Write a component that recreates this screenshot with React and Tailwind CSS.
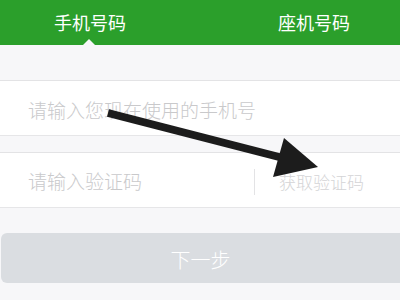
import React from 'react';

const font = { fontFamily: '"Noto Sans CJK SC", "Noto Sans", sans-serif' };

function Arrow() {
  return (
    <svg className="absolute left-0 top-0 pointer-events-none" width="400" height="300" viewBox="0 0 400 300">
      <line x1="108" y1="113" x2="283" y2="158" stroke="#1c1c1c" strokeWidth="8" strokeLinecap="butt" />
      <polygon points="284,138 318,167 273,177" fill="#1c1c1c" />
    </svg>
  );
}

export default function App() {
  return (
    <div className="relative w-[400px] h-[300px] overflow-hidden bg-[#f7f7f9]" style={font}>
      {/* tabs */}
      <div className="relative h-[45px] bg-[#2b9f2b] flex items-center text-white text-[18px]">
        <span className="ml-[54px]">手机号码</span>
        <span className="ml-auto mr-[50px]">座机号码</span>
        <div className="absolute left-[83px] bottom-0 w-0 h-0 border-l-[6px] border-r-[6px] border-b-[6px] border-l-transparent border-r-transparent border-b-[#f7f7f9]" />
      </div>

      <div className="h-[36px] border-b border-[#e3e3e5]" />

      <div className="h-[55px] bg-white border-b border-[#e6e6e8] flex items-center pl-[28px] pt-[4px]">
        <span className="text-[19px] font-light text-[#c9c9cb]">请输入您现在使用的手机号</span>
      </div>

      <div className="h-[17px] border-b border-[#e3e3e5]" />

      <div className="h-[55px] bg-white border-b border-[#e6e6e8] flex items-center pl-[28px] pt-[3px]">
        <span className="text-[19px] font-light text-[#c9c9cb] w-[226px]">请输入验证码</span>
        <div className="w-px h-[26px] bg-[#e3e3e5]" />
        <span className="ml-[24px] text-[17px] font-light text-[#d4d4d6]">获取验证码</span>
      </div>

      <div className="pt-[25px] pl-[1px]">
        <div className="h-[50px] rounded-l-[6px] bg-[#dadde1] flex items-center justify-center pt-[3px]">
          <span className="text-[20px] font-light text-white">下一步</span>
        </div>
      </div>

      <Arrow />
    </div>
  );
}
